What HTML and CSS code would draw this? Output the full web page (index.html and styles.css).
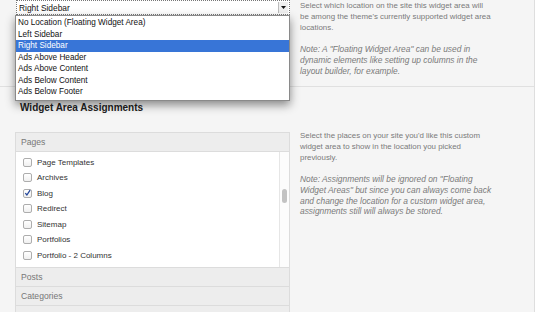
FILE: index.html
```html
<!DOCTYPE html>
<html lang="en">
<head>
    <meta charset="UTF-8">
    <title>Widget Area Settings</title>
    <link rel="stylesheet" href="styles.css">
</head>
<body>

<div class="panel">

    <div class="row row-location">
        <div class="field">
            <div class="select">
                <span class="select-value">Right Sidebar</span>
                <span class="select-arrow">
                    <svg width="5" height="3" viewBox="0 0 5 3"><path d="M0 0 L5 0 L2.5 3 Z" fill="#111"/></svg>
                </span>
            </div>
            <ul class="dropdown">
                <li>No Location (Floating Widget Area)</li>
                <li>Left Sidebar</li>
                <li class="selected">Right Sidebar</li>
                <li>Ads Above Header</li>
                <li>Ads Above Content</li>
                <li>Ads Below Content</li>
                <li>Ads Below Footer</li>
            </ul>
        </div>
        <div class="desc">
            <p>Select which location on the site this widget area will be among the theme's currently supported widget area locations.</p>
            <p class="note">Note: A "Floating Widget Area" can be used in dynamic elements like setting up columns in the layout builder, for example.</p>
        </div>
    </div>

    <div class="row row-assign">
        <div class="field">
            <h3>Widget Area Assignments</h3>
            <div class="assign-box">
                <div class="group-head">Pages</div>
                <div class="group-body">
                    <ul class="checklist">
                        <li><span class="check"></span></li>
                        <li><span class="check"></span>Page Templates</li>
                        <li><span class="check"></span>Archives</li>
                        <li><span class="check checked"><svg width="8" height="8" viewBox="0 0 8 8"><path d="M1.5 4.2 L3.3 6.3 L7 0.8" fill="none" stroke="#24479a" stroke-width="1.5"/></svg></span>Blog</li>
                        <li><span class="check"></span>Redirect</li>
                        <li><span class="check"></span>Sitemap</li>
                        <li><span class="check"></span>Portfolios</li>
                        <li><span class="check"></span>Portfolio - 2 Columns</li>
                    </ul>
                    <div class="scrollbar"><span class="thumb"></span></div>
                </div>
                <div class="group-head">Posts</div>
                <div class="group-head">Categories</div>
                <div class="group-head">Tags</div>
            </div>
        </div>
        <div class="desc">
            <p>Select the places on your site you'd like this custom widget area to show in the location you picked previously.</p>
            <p class="note">Note: Assignments will be ignored on "Floating Widget Areas" but since you can always come back and change the location for a custom widget area, assignments still will always be stored.</p>
        </div>
    </div>

</div>

</body>
</html>
```

FILE: styles.css
```css
body {
    margin: 0;
    background: #fff;
    font-family: "Liberation Sans", Arial, sans-serif;
    font-size: 8px;
    color: #333;
}
.panel {
    width: 534px;
    height: 312px;
    background: #f5f5f5;
    border-right: 1px solid #dedede;
    overflow: hidden;
}
.row {
    display: flex;
    gap: 10px;
    padding-left: 15px;
}
.row-location {
    height: 86px;
    border-bottom: 1px solid #e0e0e0;
}
.field {
    position: relative;
    width: 275px;
    flex-shrink: 0;
}
.desc {
    width: 192px;
    color: #7a7a7a;
    font-size: 7.9px;
    line-height: 11px;
}
.desc p {
    margin: 0 0 11px;
}
.desc .note {
    font-style: italic;
    font-size: 8.4px;
    line-height: 10.8px;
}
.row-location .desc {
    padding-top: 0;
}
.row-assign .desc {
    padding-top: 43px;
}

/* location select */
.select {
    display: flex;
    align-items: center;
    height: 13px;
    margin-left: 1px;
    border: 1px dotted #777;
    background: #fff;
    font-size: 8.4px;
}
.select-value {
    flex: 1;
    padding-left: 2px;
    color: #111;
}
.select-arrow {
    display: flex;
    align-items: center;
    justify-content: center;
    width: 9px;
    height: 11px;
    margin-right: 1px;
    border-left: 1px solid #bbb;
    background: #f0f0f0;
}
.dropdown {
    position: absolute;
    top: 15px;
    left: 0;
    width: 273px;
    margin: 0;
    padding: 1px 0 2px;
    list-style: none;
    background: #fff;
    border: 1px solid #8a8a8a;
    box-shadow: 0 4px 9px rgba(0, 0, 0, 0.45);
    z-index: 5;
}
.dropdown li {
    height: 11.5px;
    line-height: 11.5px;
    padding-left: 2px;
    color: #111;
    font-size: 8.2px;
}
.dropdown li.selected {
    background: #3875d7;
    color: #fff;
}

/* assignments */
h3 {
    margin: 0;
    padding: 15px 0 0 5px;
    height: 30px;
    font-size: 10px;
    color: #222;
}
.assign-box {
    border: 1px solid #dcdcdc;
    border-bottom: none;
}
.group-head {
    height: 18px;
    line-height: 18px;
    padding-left: 5px;
    background: #ededed;
    border-bottom: 1px solid #dcdcdc;
    color: #777;
    font-size: 8.6px;
}
.group-body {
    display: flex;
    height: 115px;
    background: #fff;
    border-bottom: 1px solid #dcdcdc;
    overflow: hidden;
}
.checklist {
    flex: 1;
    margin: -13px 0 0;
    padding: 0 0 0 7px;
    list-style: none;
}
.checklist li {
    display: flex;
    align-items: center;
    gap: 5px;
    height: 15.5px;
    color: #333;
}
.check {
    display: flex;
    align-items: center;
    justify-content: center;
    width: 7px;
    height: 7px;
    border: 1px solid #adadad;
    border-radius: 2px;
    background: linear-gradient(#fff, #f0f0f0);
}
.scrollbar {
    position: relative;
    width: 9px;
    border-left: 1px solid #e6e6e6;
    background: #fcfcfc;
}
.thumb {
    position: absolute;
    left: 2px;
    top: 37px;
    width: 5px;
    height: 14px;
    border-radius: 3px;
    background: #c2c2c2;
}
```
